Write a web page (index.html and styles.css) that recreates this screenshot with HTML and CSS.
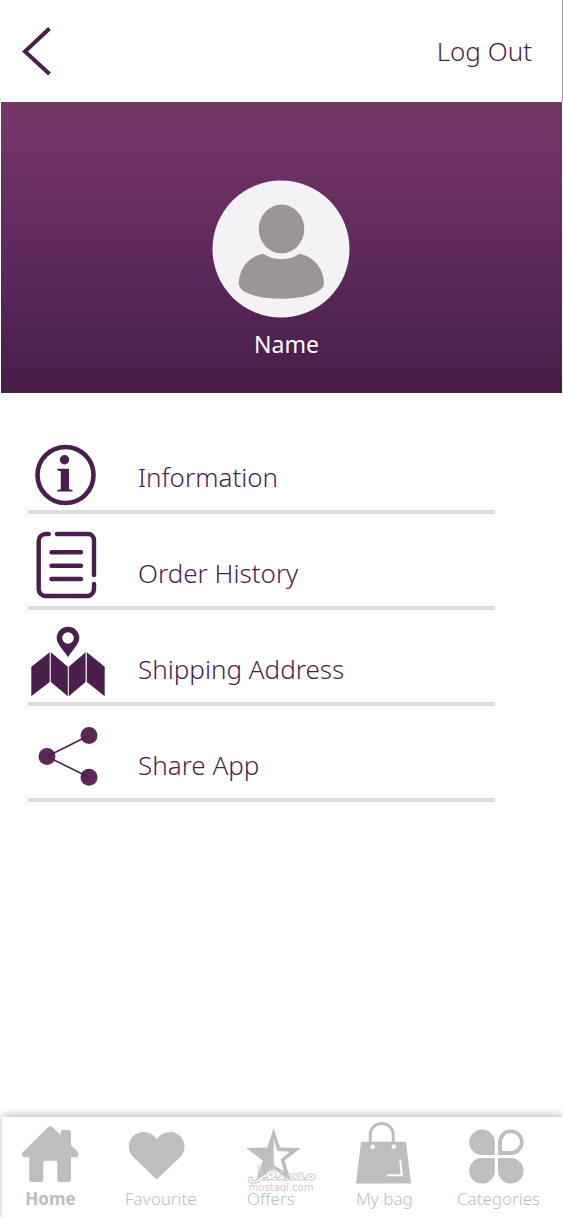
FILE: index.html
```html
<!DOCTYPE html>
<html lang="en">
<head>
<meta charset="utf-8">
<meta name="viewport" content="width=device-width, initial-scale=1">
<title>Profile</title>
<link rel="stylesheet" href="styles.css">
</head>
<body>
<div class="screen">
  <header class="topbar">
    <button class="back" type="button" aria-label="Back">
      <svg width="30" height="50" viewBox="0 0 30 50"><path d="M28.5 2.5 4 25.5 28.5 48"/></svg>
    </button>
    <button class="logout" type="button">Log Out</button>
  </header>

  <section class="hero">
    <svg class="avatar" width="138" height="138" viewBox="0 0 138 138" aria-hidden="true">
      <circle cx="69" cy="69" r="68.5" fill="#f4f2f4"/>
      <ellipse cx="69.5" cy="49" rx="22.8" ry="24.4"/>
      <path d="M51.3 73.7C61 81 78 81 87.3 73.7C103 77 112 90 112 104C110 114 90 118.7 69.5 118.7C49 118.7 28 114 26.7 104C27 90 35 77 51.3 73.7Z"/>
    </svg>
    <h1 class="name">Name</h1>
  </section>

  <main class="menu">
    <a class="row" href="#information">
      <svg class="row-icon" viewBox="0 0 80 92" aria-hidden="true">
        <circle cx="37.5" cy="57" r="28" fill="none" stroke="currentColor" stroke-width="4.6"/>
        <circle cx="36.5" cy="41.7" r="4.7"/>
        <path d="M29.3 50.8H41V71.3L44.5 72V73.5H29.3V72L32.8 71.3V53.2L29.3 52.4Z"/>
      </svg>
      <span>Information</span>
    </a>
    <a class="row" href="#orders">
      <svg class="row-icon outline" viewBox="0 0 80 92" aria-hidden="true">
        <path d="M20.8 20H17.7a7 7 0 0 0-7 7V75a7 7 0 0 0 7 7H59a7 7 0 0 0 7-7V70M29 20H60a6 6 0 0 1 6 6V61M23.5 38.3H53M23.5 51.7H53M23.5 65H53"/>
      </svg>
      <span>Order History</span>
    </a>
    <a class="row" href="#address">
      <svg class="row-icon" viewBox="0 0 80 92" aria-hidden="true">
        <path d="M3.3 56.7 21.7 42.3V72L3.3 86.2ZM22.8 42.3 39.8 56.7V86.2L22.8 72ZM40.8 56.7 57.6 42.3V72L40.8 86.2ZM58.8 42.3 76.7 56.7V86.2L58.8 72Z"/>
        <path fill-rule="evenodd" d="M40 16.7A11.3 11.3 0 0 1 51.3 28C51.3 34 45 39 40 47.3C35 39 28.7 34 28.7 28A11.3 11.3 0 0 1 40 16.7ZM40 22.2A5.8 5.8 0 1 0 40 33.8A5.8 5.8 0 1 0 40 22.2Z"/>
      </svg>
      <span>Shipping Address</span>
    </a>
    <a class="row" href="#share">
      <svg class="row-icon" viewBox="0 0 80 92" aria-hidden="true">
        <g fill="#5b2857"><circle cx="61" cy="29.5" r="8.5"/><circle cx="19" cy="50.5" r="8.5"/><circle cx="61" cy="71.3" r="8.5"/></g>
        <path d="M61 29.5 19 50.5 61 71.3" fill="none" stroke="currentColor" stroke-width="1.6"/>
      </svg>
      <span>Share App</span>
    </a>
  </main>

  <nav class="tabs">
    <a class="tab centered current" href="#home" aria-current="page">
      <svg width="57" height="62" viewBox="0 0 57 62" aria-hidden="true"><path d="M25.8 5.4Q28.3 3.2 30.8 5.4L38.7 13V10Q38.7 8 40.7 8H47Q49 8 49 10V23L55.5 29.5C58 32.5 56 35.3 53 35.3H49V58Q49 60 47 60H37.3Q35.3 60 35.3 58V41Q35.3 38.7 33 38.7H23.6Q21.3 38.7 21.3 41V58Q21.3 60 19.3 60H9.3Q7.3 60 7.3 58V35.3H3.5C.5 35.3-1 32.5 1.3 29.8Z"/></svg>
      <span>Home</span>
    </a>
    <a class="tab" href="#favourite">
      <svg width="60" height="62" viewBox="0 0 60 62" aria-hidden="true"><path d="M31.7 57.5 8.3 35C-2 24 7 10 18 10C24 10 29 13 31.7 17.2C34.5 13 39.5 10 45.5 10C56.5 10 65 24 55.3 35Z"/></svg>
      <span>Favourite</span>
    </a>
    <a class="tab" href="#offers">
      <svg width="54" height="62" viewBox="0 0 54 62" overflow="visible" aria-hidden="true"><path fill-rule="evenodd" d="M26.7 6.3 33 25.5 54 26 37.7 38.5 43.7 58.3 26.7 47 9.3 58.3 15.7 38.5-1 26 20.2 25.5ZM26.7 17V43L37 49.5 33.6 37.4 43 29.8 30.5 29Z"/></svg>
      <span>Offers</span>
      <span class="stamp" aria-hidden="true"><span class="stamp-ar" lang="ar">مستقل</span><span class="stamp-en">mostaql.com</span></span>
    </a>
    <a class="tab" href="#bag">
      <svg width="55" height="62" viewBox="0 0 55 62" aria-hidden="true"><path d="M5 19.7H50L55 61.5H0Z"/><path d="M14.2 24V12.5a11.5 11 0 0 1 23 0V24" fill="none" stroke="currentColor" stroke-width="3"/><g fill="#fff"><circle cx="16.7" cy="24.7" r="2.3"/><circle cx="37.7" cy="24.7" r="2.3"/></g><path d="M44.3 38 45.8 53.2H31" fill="none" stroke="#fff" stroke-width="2"/></svg>
      <span>My bag</span>
    </a>
    <a class="tab centered" href="#categories">
      <svg width="58" height="62" viewBox="0 0 58 62" overflow="visible" aria-hidden="true"><path d="M24.8 33V20A12.8 12.8 0 1 0 12 33ZM24.8 36V49A12.8 12.8 0 1 1 12 36ZM28 36V49A12.8 12.8 0 1 0 41 36Z"/><path fill-rule="evenodd" d="M28 33V20A12.8 12.8 0 1 1 41 33ZM32 29V20A9 9 0 1 1 41 29Z"/></svg>
      <span>Categories</span>
    </a>
  </nav>
</div>
</body>
</html>
```
FILE: styles.css
```css
* { box-sizing: border-box; }

body {
  margin: 0;
  background: #fff;
  color: #4a1f4b;
  font-family: "Noto Sans", "Open Sans", sans-serif;
  font-weight: 350;
}

a { color: inherit; text-decoration: none; }

button {
  padding: 0;
  border: 0;
  background: none;
  color: inherit;
  font: inherit;
  cursor: pointer;
}

svg { display: block; fill: currentColor; flex: none; }

.screen {
  display: flex;
  flex-direction: column;
  min-height: 100vh;
}

.topbar {
  display: flex;
  align-items: center;
  justify-content: space-between;
  height: 102px;
  padding: 0 30px 0 21px;
  border-right: 1px solid #ac93aa;
}

.back path { fill: none; stroke: currentColor; stroke-width: 4; }

.logout { font-size: 26px; line-height: 36px; }

.hero {
  display: flex;
  flex-direction: column;
  align-items: center;
  height: 291px;
  margin: 0 1px;
  padding: 78px 2px 0 0;
  background: linear-gradient(#783769, #592759 62%, #461e47);
}

.avatar { fill: #9b959a; }

.name {
  margin: 8px 0 0;
  padding-left: 12px;
  color: #fff;
  font-size: 23px;
  font-weight: 400;
  line-height: 36px;
}

.menu { padding: 25px 68px 24px 28px; }

.row {
  display: flex;
  align-items: flex-end;
  gap: 30px;
  height: 96px;
  border-bottom: 4px solid #dedcdf;
  font-size: 26px;
  line-height: 36px;
}

.row span { padding-bottom: 15px; }

.row-icon { width: 80px; height: 92px; }

.outline {
  fill: none;
  stroke: currentColor;
  stroke-width: 4.4;
  stroke-linecap: round;
}

.tabs {
  display: grid;
  grid-template-columns: 103fr 122fr 109fr 101fr 86fr;
  justify-items: start;
  height: 101px;
  margin: auto 0 0 2px;
  padding: 5px 20px 0;
  box-shadow: 0 -2px 8px rgba(0, 0, 0, .26);
  color: #bebebe;
  font-size: 17px;
  line-height: 24px;
}

.tab {
  position: relative;
  display: flex;
  flex-direction: column;
  gap: 3px;
}

.centered { align-items: center; }

.current { font-weight: 700; }

.stamp {
  position: absolute;
  top: 42px;
  left: 0;
  width: 68px;
  color: #d2cccf;
  text-align: center;
}

.stamp-ar {
  display: block;
  color: transparent;
  font: 700 19px/18px "DejaVu Sans", sans-serif;
  -webkit-text-stroke: 1px #d2cccf;
}

.stamp-en {
  display: block;
  font: 10px/12px "DejaVu Sans", sans-serif;
}
```
